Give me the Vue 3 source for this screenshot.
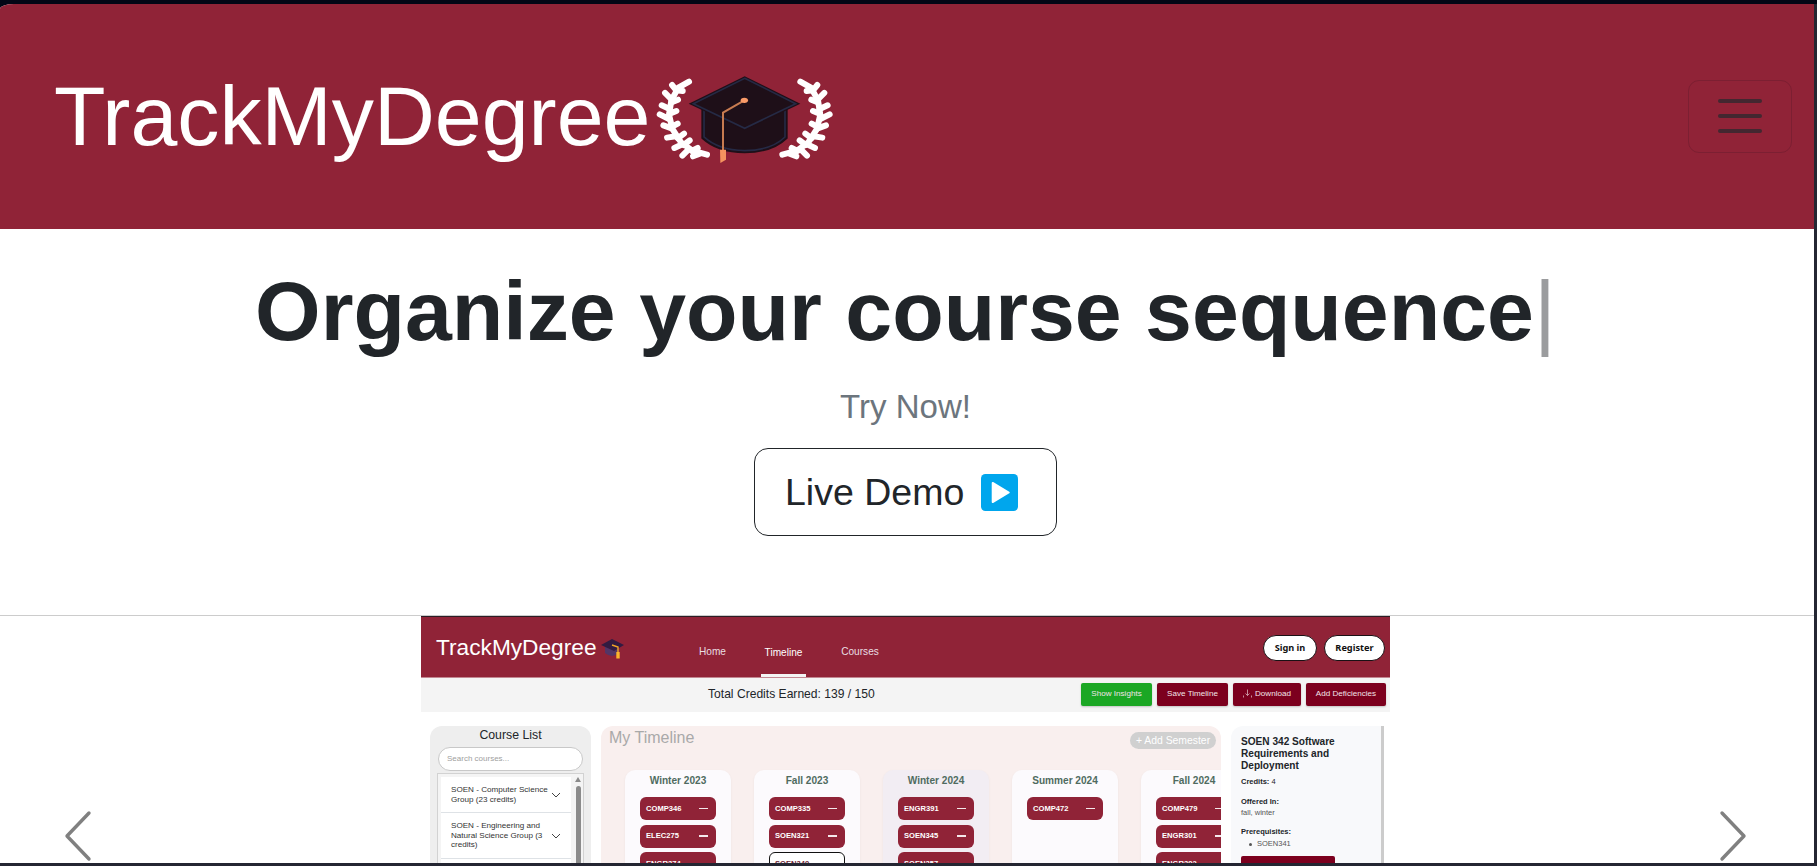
<script setup>
const laurel = [
  'M150 66 L118 84 L97 122 L90 165 L100 208 L126 248 L160 273 L204 285',
  'M112 92 L99 76 M98 120 L78 100 M92 148 L68 137 M90 178 L62 164 M98 206 L73 197 M110 230 L84 234 M130 254 L106 265 M148 270 L130 288 M182 282 L162 290',
  'M112 92 L131 94 M98 128 L117 120 M92 162 L112 154 M98 202 L116 192 M116 236 L135 222 M134 256 L152 242 M158 274 L176 265'
]
const semesters = [
  { name: 'Winter 2023', courses: ['COMP346', 'ELEC275', 'ENGR374'] },
  { name: 'Fall 2023', courses: ['COMP335', 'SOEN321', 'SOEN349'], open: 2 },
  { name: 'Winter 2024', courses: ['ENGR391', 'SOEN345', 'SOEN357'], tint: true },
  { name: 'Summer 2024', courses: ['COMP472'] },
  { name: 'Fall 2024', courses: ['COMP479', 'ENGR301', 'ENGR392'] }
]
const groups = ['SOEN - Computer Science Group (23 credits)', 'SOEN - Engineering and Natural Science Group (3 credits)', '']
</script>

<template>
  <div class="frame">
    <div class="page">
      <header class="navbar">
        <div class="brand">
          <span>TrackMyDegree</span>
          <svg class="crest" viewBox="45 40 545 280">
            <g v-for="side in 2" :key="side" :transform="side === 2 ? 'translate(634 0) scale(-1 1)' : ''" fill="none" stroke="#fff" stroke-width="18" stroke-linecap="round" stroke-linejoin="round">
              <path v-for="d in laurel" :key="d" :d="d" />
            </g>
            <path d="M190 145 V235 Q235 277 317 278 Q400 277 443 235 V145Z" fill="#1e0f18" stroke="#1e0f18" stroke-width="6" />
            <path d="M195 150 V232 Q238 272 317 273 Q397 272 438 232 V150" fill="#1e0f18" stroke="#252a45" stroke-width="5" />
            <path d="M317 50 L484 132 L317 212 L149 132Z" fill="#1e0f18" />
            <path d="M317 56 L470 132 L317 206 L163 132Z" fill="none" stroke="#252a45" stroke-width="5" />
            <path d="M316 122 L252 159 V275" fill="none" stroke="#c77b50" stroke-width="6" />
            <ellipse cx="316" cy="122" rx="11" ry="8" fill="#fa9b68" />
            <path d="M243 270 H261 V300 L244 310Z" fill="#f5935f" />
          </svg>
        </div>
        <button class="toggler"><i></i><i></i><i></i></button>
      </header>

      <section class="hero">
        <h1>Organize your course sequence<span class="cursor">|</span></h1>
        <p>Try Now!</p>
        <button class="demo">Live Demo
          <svg viewBox="0 0 38 38"><rect width="38" height="38" rx="4.5" fill="#00a6ed" /><path d="M12 9.2 L28.5 19 L12 28.8Z" fill="#fff" stroke="#fff" stroke-width="2" stroke-linejoin="round" /></svg>
        </button>
      </section>

      <section class="carousel">
        <svg class="arrow" viewBox="0 0 28 52"><path d="M25 3 L3 26 L25 49" /></svg>
        <div class="slide">
          <div class="s-nav">
            <span class="s-brand">TrackMyDegree</span>
            <svg class="s-cap" viewBox="0 0 24 20">
              <path d="M4 8 V14 Q11 20 18 14 V8Z" fill="#533566" />
              <path d="M11 0 L23 6 L13 12 L0 6Z" fill="#321b41" />
              <path d="M11 6 L17 8 V14" fill="none" stroke="#f3a527" stroke-width="1.4" />
              <rect x="15.3" y="13" width="3.4" height="6.5" fill="#fcb32c" />
            </svg>
            <nav><a>Home</a><a class="active">Timeline</a><a>Courses</a></nav>
            <div class="auth"><b>Sign in</b><b class="reg">Register</b></div>
          </div>
          <div class="s-bar">
            <span class="credits">Total Credits Earned: 139 / 150</span>
            <div class="acts">
              <span class="b1">Show Insights</span><span class="b2">Save Timeline</span>
              <span class="b3"><svg viewBox="0 0 9 9"><path d="M4.5 0.5 V6.5 M2.5 4.5 L4.5 6.5 L6.5 4.5 M0.5 6.5 V8.5 M8.5 6.5 V8.5" /></svg>Download</span>
              <span class="b4">Add Deficiencies</span>
            </div>
          </div>
          <div class="s-main">
            <aside class="list">
              <h3>Course List</h3>
              <div class="search">Search courses...</div>
              <div class="box">
                <div class="items">
                  <div v-for="(g, i) in groups" :key="i" class="item" :class="'g' + i">
                    <span>{{ g }}</span>
                    <svg v-if="g" viewBox="0 0 10 6"><path d="M1 1 L5 5 L9 1" /></svg>
                  </div>
                </div>
                <div class="track"><i></i><b></b></div>
              </div>
            </aside>
            <div class="timeline">
              <div class="t-head"><span>My Timeline</span><em>+ Add Semester</em></div>
              <div class="terms">
                <div v-for="s in semesters" :key="s.name" class="term" :class="{ tint: s.tint }">
                  <h4>{{ s.name }}</h4>
                  <div v-for="(c, i) in s.courses" :key="c" class="course" :class="{ open: s.open === i }">{{ c }}<i></i></div>
                </div>
              </div>
            </div>
            <aside class="detail">
              <h3>SOEN 342 Software Requirements and Deployment</h3>
              <p class="cr"><b>Credits:</b> 4</p>
              <p class="off"><b>Offered In:</b></p>
              <p class="seasons">fall, winter</p>
              <p class="pre"><b>Prerequisites:</b></p>
              <p class="dot"><i></i>SOEN341</p>
              <div class="remove"></div>
            </aside>
          </div>
        </div>
        <svg class="arrow" viewBox="0 0 28 52"><path d="M3 3 L25 26 L3 49" /></svg>
      </section>
    </div>
  </div>
</template>

<style>
body { margin: 0; background: #242632; overflow: hidden; }
</style>

<style scoped>
* { box-sizing: border-box; }
h1, h3, h4, p { margin: 0; font-weight: 400; }
.frame { width: 1817px; height: 866px; padding: 4px 3px 3px 0; background: linear-gradient(#030615, #030615) 0 0 / 100% 4px no-repeat, linear-gradient(#030615, #030615) 0 0 / 20px 12px no-repeat, #242632; font-family: "Liberation Sans", Arial, sans-serif; overflow: hidden; }
.page { width: 1814px; height: 859px; overflow: hidden; background: #fff; border-top-left-radius: 14px 5px; }
.navbar { height: 225px; background: #902337; display: flex; align-items: center; justify-content: space-between; padding: 0 22px 0 54px; }
.brand { display: flex; align-items: center; color: #fff; font-size: 84.3px; line-height: 100px; }
.brand span { margin-top: -1px; }
.crest { width: 181.7px; height: 93.3px; margin: 7px 0 0 4px; }
.toggler { width: 104px; height: 73px; border: 1px solid #7c1f32; border-radius: 11px; background: none; padding: 0 0 1px; display: flex; flex-direction: column; align-items: center; justify-content: center; gap: 11px; }
.toggler i { width: 44px; height: 4px; border-radius: 2px; background: #432730; }

.hero { height: 386px; padding: 32px 3px 0 0; display: flex; flex-direction: column; align-items: center; color: #212529; }
.hero h1 { font-size: 84.3px; line-height: 100px; font-weight: 700; white-space: nowrap; }
.cursor { color: #9b9c9e; font-weight: 400; }
.hero p { margin-top: 26px; font-size: 33px; line-height: 40px; color: #6c757d; }
.demo { margin-top: 21px; width: 303px; height: 88px; border: 1px solid #212529; border-radius: 14px; background: #fff; font: 37.5px/44px "Liberation Sans", Arial, sans-serif; color: #212529; display: flex; align-items: center; padding: 0 0 0 30px; }
.demo svg { width: 37px; height: 37px; margin-left: 17px; }

.carousel { height: 248px; border-top: 1px solid #ccc; display: flex; justify-content: space-between; align-items: flex-start; padding: 0 67px 0 64px; overflow: hidden; }
.arrow { width: 28px; height: 52px; margin-top: 194px; fill: none; stroke: #808080; stroke-width: 3.4; stroke-linecap: round; stroke-linejoin: round; }
.slide { width: 969px; height: 247px; overflow: hidden; }
.s-nav { height: 62px; background: #902337; border-top: 1px solid #2b1d25; border-bottom: 1px solid #c28791; display: flex; align-items: flex-start; color: #fff; padding-left: 15px; }
.s-brand { font-size: 22.7px; line-height: 30px; margin-top: 15px; width: 160px; white-space: nowrap; }
.s-cap { width: 24px; height: 20px; margin: 22px 0 0 5px; }
nav { display: flex; font-size: 10.1px; line-height: 14px; color: #e9dfe2; padding-top: 28px; margin-left: 74px; }
nav a { width: 27px; text-align: center; white-space: nowrap; }
nav a.active { width: 45px; height: 32px; margin: 0 35px; padding-top: 1px; border-bottom: 3px solid #f4f4f4; color: #fff; }
nav a:last-child { width: 38px; }
.auth { display: flex; gap: 7px; margin: 18px 5px 0 auto; }
.auth b { width: 54px; height: 26px; border: 1px solid #1a1014; border-radius: 13px; background: #fff; color: #111; font: 700 9.2px/23px "Noto Sans", sans-serif; text-align: center; }
.auth .reg { width: 61px; }
.s-bar { height: 34px; background: #f4f4f4; display: flex; padding: 5px 4px 0 287px; justify-content: space-between; color: #212529; }
.credits { font-size: 12.1px; line-height: 23px; white-space: nowrap; }
.acts { display: flex; gap: 5px; }
.acts span { height: 23px; border-radius: 2px; background: #7c001e; color: #f2e4e8; font-size: 8.1px; line-height: 22px; text-align: center; white-space: nowrap; box-shadow: 0 1px 2px #0003; }
.acts .b1 { width: 71px; background: #1ba724; }
.acts .b2 { width: 71px; }
.acts .b3 { width: 68px; }
.acts .b4 { width: 80px; }
.acts svg { width: 9px; height: 9px; fill: none; stroke: #d9b0bb; stroke-width: 0.8; vertical-align: -2px; margin-right: 3px; }
.s-main { display: flex; padding: 14px 0 0 9px; align-items: flex-start; }

.list { width: 161px; height: 137px; background: #eee; border-radius: 12px 12px 0 0; padding: 0 7px; flex: none; }
.list h3 { font-size: 12.3px; line-height: 19px; text-align: center; color: #212529; }
.search { height: 24px; margin: 2px 0 2px 1px; width: 145px; border: 1px solid #c8c8c8; border-radius: 12px; background: #fff; color: #a0a0a0; font-size: 8px; line-height: 21px; padding-left: 8px; }
.box { border: 1px solid #d2d2d2; height: 95px; display: flex; background: #f4f4f4; padding: 3px 0 0 3px; }
.items { width: 130px; }
.item { height: 36px; background: #fff; border-bottom: 1px solid #dee2e6; font-size: 8.1px; line-height: 9.8px; color: #333; display: flex; align-items: center; padding: 0 11px 0 10px; }
.item span { width: 100px; flex: none; }
.item svg { width: 10px; height: 6px; flex: none; fill: none; stroke: #444; stroke-width: 1; }
.item.g1 { height: 46px; }
.track { margin-left: 4px; width: 7px; }
.track i { display: block; border: 3px solid transparent; border-top: 0; border-bottom: 5px solid #8b8b8b; height: 0; width: 0; }
.track b { display: block; margin: 4px 0 0 1px; width: 5px; height: 90px; border-radius: 3px 3px 0 0; background: #8b8b8b; }

.timeline { width: 620px; height: 137px; margin-left: 10px; background: #f9efee; border-radius: 12px 12px 0 0; overflow: hidden; flex: none; }
.t-head { height: 44px; display: flex; justify-content: space-between; padding: 0 5px 0 8px; color: #a9a9a9; font-size: 16px; line-height: 24px; }
.t-head em { font-style: normal; margin-top: 6px; width: 86px; height: 17px; border-radius: 9px; background: #d0d0d0; color: #fff; font-size: 10.4px; line-height: 17px; text-align: center; }
.terms { display: flex; gap: 23px; padding-left: 24px; }
.term { width: 106px; height: 100px; flex: none; background: #fcfafd; border-radius: 10px 10px 0 0; padding-left: 15px; box-shadow: 0 1px 3px #0000000d; }
.term.tint { background: #f2edf3; }
.term h4 { font-size: 10.1px; font-weight: 700; line-height: 22px; color: #4f6b60; text-align: center; margin: 0 15px 5px 0; white-space: nowrap; }
.course { width: 76px; height: 23px; margin-bottom: 4.5px; border-radius: 6px; background: #902337; color: #fff; font-size: 7.6px; font-weight: 700; line-height: 22px; padding: 0 8px 0 6px; display: flex; align-items: center; justify-content: space-between; }
.course i { width: 9px; height: 1.5px; background: #f4e8eb; }
.course.open { background: #fff; border: 1px solid #111; color: #6d2634; line-height: 20px; padding-left: 5px; }
.course.open i { background: #fff; }

.detail { width: 153px; height: 137px; margin-left: 10px; background: #f8f9fb; border-radius: 12px 0 0 0; border-right: 3px solid #ccc; padding: 10px 15px 0 10px; flex: none; color: #212529; font-size: 7.5px; line-height: 10px; }
.detail h3 { font-size: 10.1px; font-weight: 700; line-height: 12px; }
.cr { margin-top: 5px; }
.off { margin-top: 10px; }
.seasons, .dot { margin-top: 1px; color: #555; }
.pre { margin-top: 9px; }
.dot { display: flex; align-items: center; padding-left: 8px; margin-top: 2px; }
.dot i { width: 3px; height: 3px; border-radius: 50%; background: #555; margin-right: 5px; }
.remove { width: 94px; height: 12px; margin-top: 7px; background: #7c001e; border-radius: 2px; }
</style>
